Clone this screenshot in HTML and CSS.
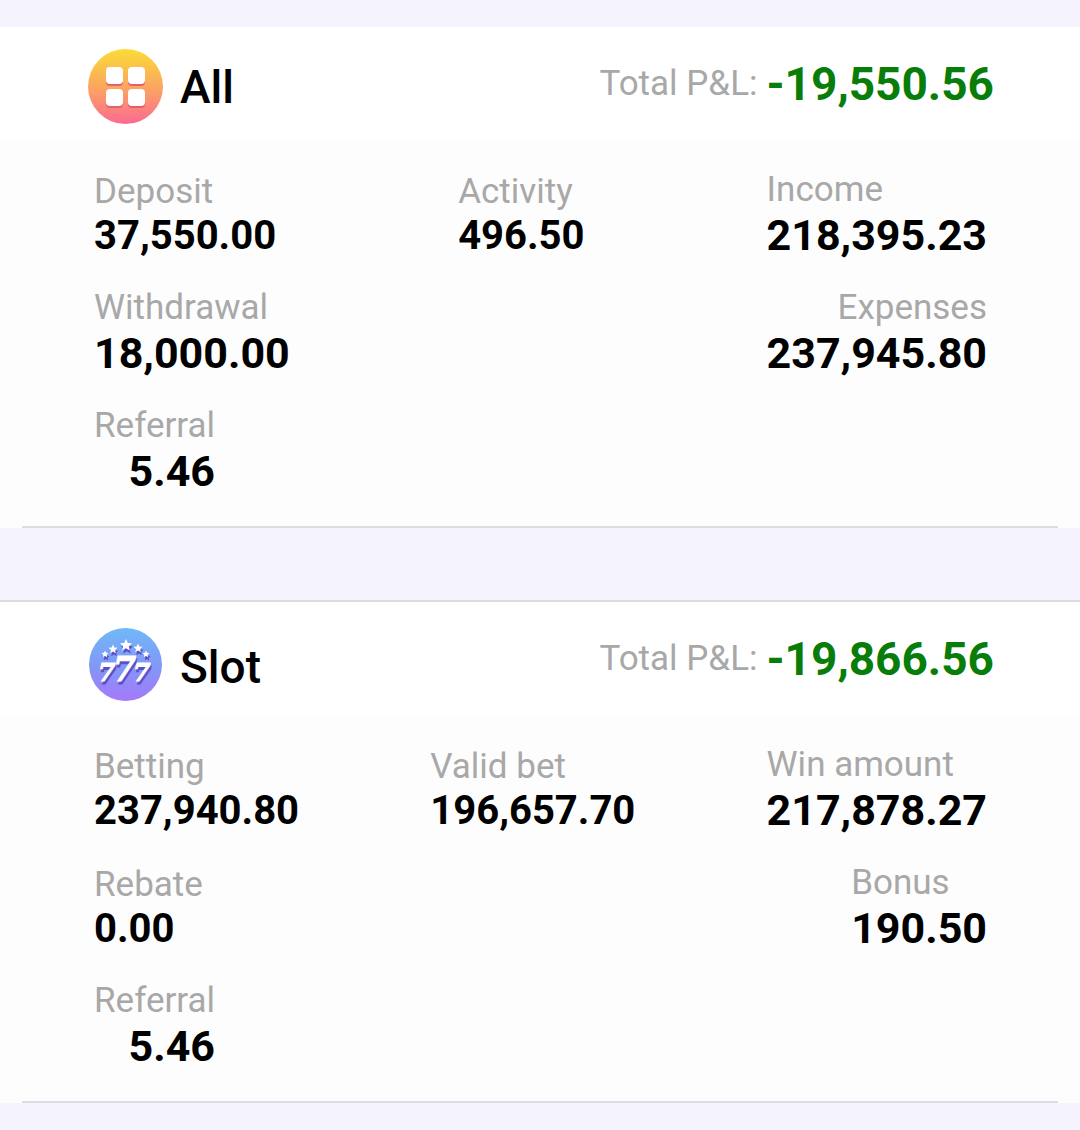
FILE: index.html
```html
<!DOCTYPE html>
<html lang="en">
<head>
    <meta charset="UTF-8">
    <meta name="viewport" content="width=device-width, initial-scale=1.0">
    <title>Profit and Loss</title>
    <link rel="stylesheet" href="styles.css">
</head>
<body>
    <main class="report">
        <section class="card">
            <div class="card-header">
                <div class="card-title">
                    <svg class="card-icon" viewBox="0 0 75 75" aria-hidden="true">
                        <defs>
                            <linearGradient id="allBg" x1="0" y1="0" x2="0" y2="1">
                                <stop offset="0" stop-color="#fbdc36"/>
                                <stop offset="0.5" stop-color="#fba75f"/>
                                <stop offset="1" stop-color="#fb6a92"/>
                            </linearGradient>
                        </defs>
                        <circle cx="37.5" cy="37.5" r="37.5" fill="url(#allBg)"/>
                        <g fill="#e2606a">
                            <rect x="18" y="20" width="17" height="17" rx="4"/>
                            <rect x="40" y="20" width="17" height="17" rx="4"/>
                            <rect x="18" y="42" width="17" height="17" rx="4"/>
                            <rect x="40" y="42" width="17" height="17" rx="4"/>
                        </g>
                        <g fill="#fff">
                            <rect x="18" y="18" width="17" height="17" rx="4"/>
                            <rect x="40" y="18" width="17" height="17" rx="4"/>
                            <rect x="18" y="40" width="17" height="17" rx="4"/>
                            <rect x="40" y="40" width="17" height="17" rx="4"/>
                        </g>
                    </svg>
                    <h2>All</h2>
                </div>
                <div class="total">
                    <span class="total-label">Total P&amp;L:</span>
                    <span class="total-value">-19,550.56</span>
                </div>
            </div>
            <dl class="stats">
                <div class="stats-row">
                    <div class="stat">
                        <dt>Deposit</dt>
                        <dd>37,550.00</dd>
                    </div>
                    <div class="stat">
                        <dt>Activity</dt>
                        <dd>496.50</dd>
                    </div>
                    <div class="stat stat-large">
                        <dt>Income</dt>
                        <dd>218,395.23</dd>
                    </div>
                </div>
                <div class="stats-row">
                    <div class="stat stat-large">
                        <dt>Withdrawal</dt>
                        <dd>18,000.00</dd>
                    </div>
                    <div class="stat stat-large stat-right">
                        <dt>Expenses</dt>
                        <dd>237,945.80</dd>
                    </div>
                </div>
                <div class="stats-row">
                    <div class="stat stat-large stat-right">
                        <dt>Referral</dt>
                        <dd>5.46</dd>
                    </div>
                </div>
            </dl>
            <hr class="divider">
        </section>

        <section class="card card-bordered">
            <div class="card-header">
                <div class="card-title card-title-low">
                    <svg class="card-icon" viewBox="-1 -1 75 75" aria-hidden="true">
                        <defs>
                            <linearGradient id="slotBg" x1="0" y1="0" x2="0" y2="1">
                                <stop offset="0" stop-color="#6fb9f8"/>
                                <stop offset="0.5" stop-color="#8199f6"/>
                                <stop offset="1" stop-color="#a678fb"/>
                            </linearGradient>
                            <polygon id="star" points="0,-5 1.5,-1.7 5,-1.4 2.4,1 3.1,4.6 0,2.7 -3.1,4.6 -2.4,1 -5,-1.4 -1.5,-1.7"/>
                            <g id="stars">
                                <use href="#star" transform="translate(37 17) scale(1.2)"/>
                                <use href="#star" transform="translate(24 21) scale(0.9)"/>
                                <use href="#star" transform="translate(49 20) scale(0.9)"/>
                                <use href="#star" transform="translate(16 26) scale(0.7)"/>
                                <use href="#star" transform="translate(57 26) scale(0.7)"/>
                            </g>
                            <g id="outerSevens" class="sevens">
                                <text x="9" y="53" font-size="25">7</text>
                                <text x="44" y="53" font-size="25">7</text>
                            </g>
                            <text id="middleSeven" class="sevens" x="24" y="53" font-size="33">7</text>
                        </defs>
                        <circle cx="36.5" cy="36.5" r="36.5" fill="url(#slotBg)"/>
                        <use href="#stars" x="1" y="3" fill="#5a4fc4"/>
                        <use href="#stars" fill="#fff"/>
                        <use href="#outerSevens" x="1" y="3" fill="#5a4fc4" stroke="#5a4fc4"/>
                        <use href="#outerSevens" fill="#fff" stroke="#fff"/>
                        <use href="#middleSeven" x="1" y="3" fill="#5a4fc4" stroke="#5a4fc4"/>
                        <use href="#middleSeven" fill="#fff" stroke="#fff"/>
                    </svg>
                    <h2>Slot</h2>
                </div>
                <div class="total">
                    <span class="total-label">Total P&amp;L:</span>
                    <span class="total-value">-19,866.56</span>
                </div>
            </div>
            <dl class="stats">
                <div class="stats-row">
                    <div class="stat">
                        <dt>Betting</dt>
                        <dd>237,940.80</dd>
                    </div>
                    <div class="stat">
                        <dt>Valid bet</dt>
                        <dd>196,657.70</dd>
                    </div>
                    <div class="stat stat-large">
                        <dt>Win amount</dt>
                        <dd>217,878.27</dd>
                    </div>
                </div>
                <div class="stats-row">
                    <div class="stat">
                        <dt>Rebate</dt>
                        <dd>0.00</dd>
                    </div>
                    <div class="stat stat-large">
                        <dt>Bonus</dt>
                        <dd>190.50</dd>
                    </div>
                </div>
                <div class="stats-row">
                    <div class="stat stat-large stat-right">
                        <dt>Referral</dt>
                        <dd>5.46</dd>
                    </div>
                </div>
            </dl>
            <hr class="divider">
        </section>
    </main>
</body>
</html>
```
FILE: styles.css
```css
:root {
    --page: #f5f4fe;
    --body: #fdfdfd;
    --line: #dddce1;
    --label: #a8a8a8;
    --green: #087d0a;
}

* {
    box-sizing: border-box;
}

body {
    margin: 0;
    background: var(--page);
    color: #000;
    font-family: Roboto, "Liberation Sans", sans-serif;
}

.report {
    display: flex;
    flex-direction: column;
    gap: 72px;
    padding: 27px 0;
}

.card {
    background: var(--body);
}

.card-bordered {
    border-top: 2px solid var(--line);
}

.card-header {
    display: flex;
    align-items: center;
    justify-content: space-between;
    height: 113px;
    padding: 0 86px 0 88px;
    background: #fff;
}

.card-title {
    display: flex;
    align-items: center;
    gap: 17px;
    padding-top: 6px;
}

.card-title-low {
    padding-top: 16px;
}

.card-title h2 {
    margin: 0;
    font-size: 46px;
    font-weight: 500;
}

.card-icon {
    width: 75px;
    height: 75px;
}

.card-title-low .card-icon {
    margin-bottom: 4px;
}

.sevens {
    font-family: "DejaVu Serif", "Liberation Serif", serif;
    font-style: italic;
    font-weight: 700;
    stroke-width: 1;
}

.total {
    display: flex;
    align-items: center;
    gap: 9px;
}

.total-label {
    color: var(--label);
    font-size: 35px;
}

.total-value {
    color: var(--green);
    font-size: 46px;
    font-weight: 700;
}

.stats {
    display: flex;
    flex-direction: column;
    gap: 27px;
    margin: 0;
    padding: 29px 93px 30px 94px;
}

.stats-row {
    display: flex;
    align-items: center;
    justify-content: space-between;
}

.stat dt {
    color: var(--label);
    font-size: 35px;
}

.stat dd {
    margin: 0;
    font-size: 40px;
    font-weight: 700;
}

.stat-large dd {
    font-size: 43px;
}

.stat-right {
    text-align: right;
}

.divider {
    height: 2px;
    margin: 0 22px;
    border: 0;
    background: var(--line);
}
```
